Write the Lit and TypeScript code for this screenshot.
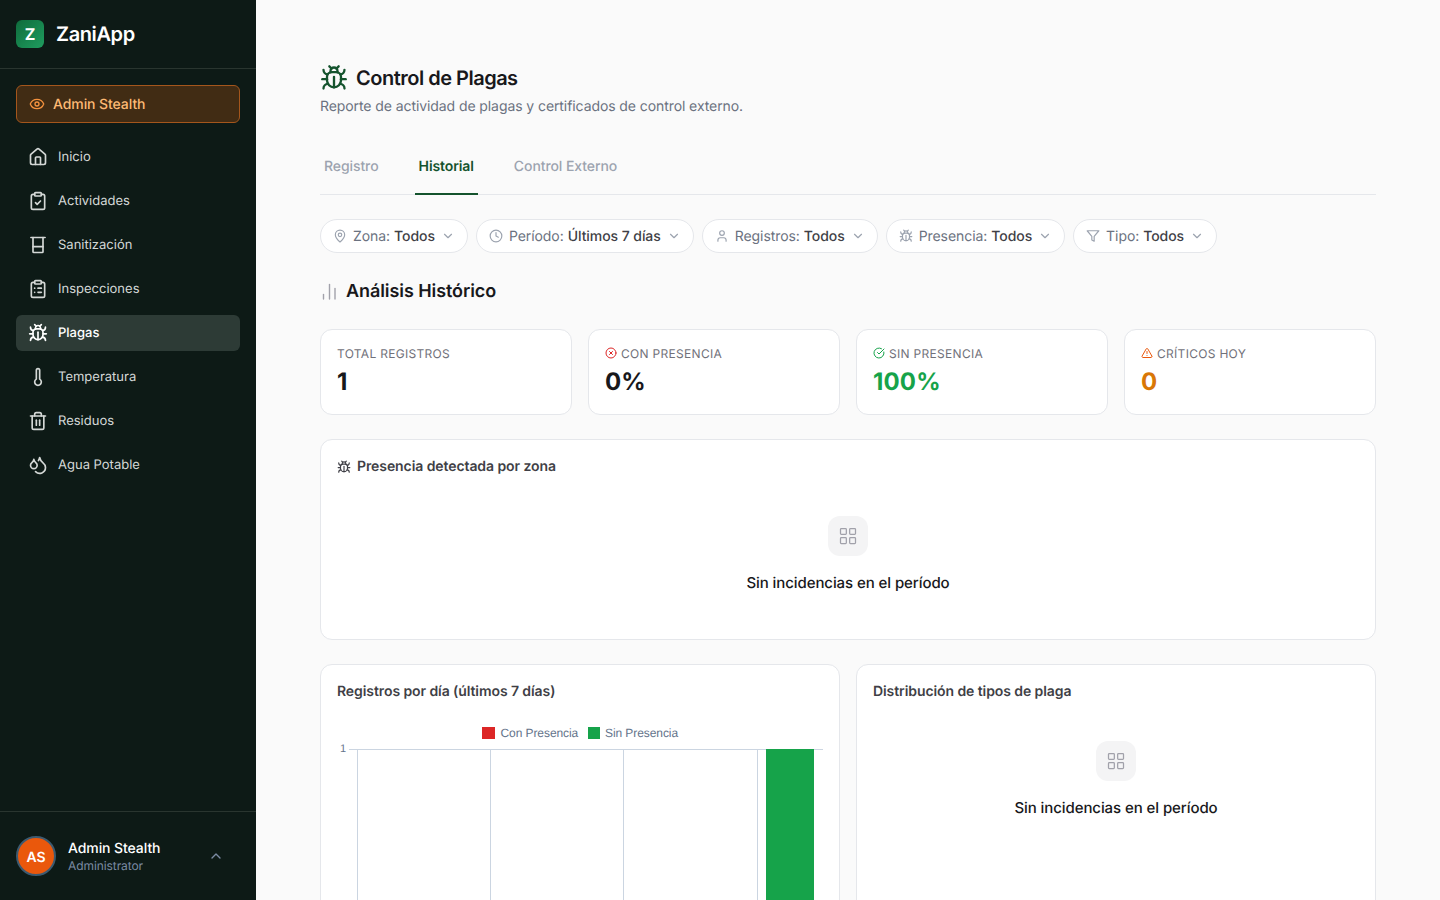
import { LitElement, html, css, svg } from "lit";
import { customElement } from "lit/decorators.js";

const P: Record<string, any> = {
  bug: svg`<path d="m8 2 1.88 1.88"/><path d="M14.12 3.88 16 2"/><path d="M9 7.13v-1a3.003 3.003 0 1 1 6 0v1"/><path d="M12 20c-3.3 0-6-2.7-6-6v-3a4 4 0 0 1 4-4h4a4 4 0 0 1 4 4v3c0 3.3-2.7 6-6 6"/><path d="M12 20v-9"/><path d="M6.53 9C4.6 8.8 3 7.1 3 5"/><path d="M6 13H2"/><path d="M3 21c0-2.1 1.7-3.9 3.8-4"/><path d="M20.97 5c0 2.1-1.6 3.8-3.5 4"/><path d="M22 13h-4"/><path d="M17.2 17c2.1.1 3.8 1.9 3.8 4"/>`,
  home: svg`<path d="M15 21v-8a1 1 0 0 0-1-1h-4a1 1 0 0 0-1 1v8"/><path d="M3 10a2 2 0 0 1 .709-1.528l7-5.999a2 2 0 0 1 2.582 0l7 5.999A2 2 0 0 1 21 10v9a2 2 0 0 1-2 2H5a2 2 0 0 1-2-2z"/>`,
  check: svg`<rect x="8" y="2" width="8" height="4" rx="1"/><path d="M16 4h2a2 2 0 0 1 2 2v14a2 2 0 0 1-2 2H6a2 2 0 0 1-2-2V6a2 2 0 0 1 2-2h2"/><path d="m9 14 2 2 4-4"/>`,
  glass: svg`<path d="M3.5 3h17"/><path d="M6 3v17a1 1 0 0 0 1 1h10a1 1 0 0 0 1-1V3"/><path d="M6 14h12"/>`,
  list: svg`<rect x="8" y="2" width="8" height="4" rx="1"/><path d="M16 4h2a2 2 0 0 1 2 2v14a2 2 0 0 1-2 2H6a2 2 0 0 1-2-2V6a2 2 0 0 1 2-2h2"/><path d="M12 11h4"/><path d="M12 16h4"/><path d="M8 11h.01"/><path d="M8 16h.01"/>`,
  thermo: svg`<path d="M14 4v10.54a4 4 0 1 1-4 0V4a2 2 0 0 1 4 0Z"/>`,
  trash: svg`<path d="M3 6h18"/><path d="M19 6v14c0 1-1 2-2 2H7c-1 0-2-1-2-2V6"/><path d="M8 6V4c0-1 1-2 2-2h4c1 0 2 1 2 2v2"/><line x1="10" x2="10" y1="11" y2="17"/><line x1="14" x2="14" y1="11" y2="17"/>`,
  drops: svg`<path d="M7 16.3c2.2 0 4-1.83 4-4.05 0-1.16-.57-2.26-1.71-3.19S7.29 6.75 7 5.3c-.29 1.45-1.14 2.84-2.29 3.76S3 11.1 3 12.25c0 2.22 1.8 4.05 4 4.05z"/><path d="M12.56 6.6A10.97 10.97 0 0 0 14 3.02c.5 2.5 2 4.9 4 6.5s3 3.5 3 5.5a6.98 6.98 0 0 1-11.91 4.97"/>`,
  eye: svg`<path d="M2.062 12.348a1 1 0 0 1 0-.696 10.75 10.75 0 0 1 19.876 0 1 1 0 0 1 0 .696 10.75 10.75 0 0 1-19.876 0"/><circle cx="12" cy="12" r="3"/>`,
  down: svg`<path d="m6 9 6 6 6-6"/>`,
  up: svg`<path d="m18 15-6-6-6 6"/>`,
  pin: svg`<path d="M20 10c0 4.993-5.539 10.193-7.399 11.799a1 1 0 0 1-1.202 0C9.539 20.193 4 14.993 4 10a8 8 0 0 1 16 0"/><circle cx="12" cy="10" r="3"/>`,
  clock: svg`<circle cx="12" cy="12" r="10"/><polyline points="12 6 12 12 16 14"/>`,
  user: svg`<path d="M19 21v-2a4 4 0 0 0-4-4H9a4 4 0 0 0-4 4v2"/><circle cx="12" cy="7" r="4"/>`,
  filter: svg`<polygon points="22 3 2 3 10 12.46 10 19 14 21 14 12.46 22 3"/>`,
  xc: svg`<circle cx="12" cy="12" r="10"/><path d="m15 9-6 6"/><path d="m9 9 6 6"/>`,
  okc: svg`<path d="M21.801 10A10 10 0 1 1 17 3.335"/><path d="m9 11 3 3L22 4"/>`,
  warn: svg`<path d="m21.73 18-8-14a2 2 0 0 0-3.48 0l-8 14A2 2 0 0 0 4 21h16a2 2 0 0 0 1.73-3"/><path d="M12 9v4"/><path d="M12 17h.01"/>`,
  grid: svg`<rect x="3" y="3" width="7" height="7" rx="1"/><rect x="14" y="3" width="7" height="7" rx="1"/><rect x="14" y="14" width="7" height="7" rx="1"/><rect x="3" y="14" width="7" height="7" rx="1"/>`,
};

const icon = (n: string, cls = "") =>
  html`<svg class="ic ${cls}" viewBox="0 0 24 24" fill="none" stroke="currentColor" stroke-width="2" stroke-linecap="round" stroke-linejoin="round">${P[n]}</svg>`;

const NAV = [
  ["home", "Inicio"],
  ["check", "Actividades"],
  ["glass", "Sanitización"],
  ["list", "Inspecciones"],
  ["bug", "Plagas", true],
  ["thermo", "Temperatura"],
  ["trash", "Residuos"],
  ["drops", "Agua Potable"],
] as [string, string, boolean?][];

const FILTERS = [
  ["pin", "Zona:", "Todos"],
  ["clock", "Período:", "Últimos 7 días"],
  ["user", "Registros:", "Todos"],
  ["bug", "Presencia:", "Todos"],
  ["filter", "Tipo:", "Todos"],
];

@customElement("app-root")
export class AppRoot extends LitElement {
  static styles = css`
    :host {
      display: flex;
      height: 100vh;
      overflow: hidden;
      font-family: Inter, "Noto Sans", sans-serif;
      background: #fafafa;
      color: #18181b;
      letter-spacing: -0.084px;
      text-rendering: geometricPrecision;
    }
    * { box-sizing: border-box; }
    .ic { display: block; flex: none; width: 20px; height: 20px; }
    .side {
      width: 256px;
      flex: none;
      height: 100%;
      background: #0d1a16;
      display: flex;
      flex-direction: column;
    }
    .brand {
      height: 69px;
      flex: none;
      border-bottom: 1px solid #29352f;
      display: flex;
      align-items: center;
      gap: 12px;
      padding: 0 16px;
    }
    .logo {
      width: 28px;
      height: 28px;
      border-radius: 6px;
      background: linear-gradient(135deg, #0f6b3c, #1f9d5f);
      color: #fff;
      font-weight: 700;
      font-size: 16px;
      display: flex;
      align-items: center;
      justify-content: center;
    }
    .brandname { color: #fff; font-size: 20px; font-weight: 600; letter-spacing: -0.4px; }
    .stealth {
      margin: 16px 16px 16px;
      height: 38px;
      border: 1px solid #a4561c;
      border-radius: 6px;
      background: #412c14;
      color: #fdba74;
      display: flex;
      align-items: center;
      gap: 8px;
      padding: 0 12px;
      font-size: 14px;
      font-weight: 500;
    }
    .stealth .ic { width: 16px; height: 16px; color: #f5923e; }
    nav { display: flex; flex-direction: column; gap: 8px; padding: 0 16px; flex: 1; }
    .item {
      height: 36px;
      border-radius: 6px;
      display: flex;
      align-items: center;
      gap: 10px;
      padding: 0 12px;
      color: #d4d8d6;
      font-size: 13px;
      letter-spacing: 0;
    }
    .item.on { background: #2d3b36; color: #fff; font-weight: 500; }
    .foot {
      height: 89px;
      flex: none;
      border-top: 1px solid #29352f;
      display: flex;
      align-items: center;
      padding: 0 32px 0 16px;
      gap: 12px;
    }
    .avatar {
      width: 40px;
      height: 40px;
      border-radius: 50%;
      background: #ea580c;
      border: 2px solid #3c5a70;
      color: #fff;
      font-size: 14px;
      font-weight: 600;
      display: flex;
      align-items: center;
      justify-content: center;
      flex: none;
      padding-top: 2px;
    }
    .who { flex: 1; height: 36px; padding-top: 1px; display: flex; flex-direction: column; }
    .who b { color: #fff; font-size: 14px; line-height: 20px; font-weight: 500; }
    .who span { color: #7b8ba3; font-size: 12px; line-height: 16px; margin-top: -1px; }
    .foot .ic { width: 16px; height: 16px; color: #7b8ba3; }

    main { flex: 1; min-width: 0; height: 100%; overflow: hidden; padding: 64px 64px 0; }
    .title { display: flex; align-items: center; gap: 8px; height: 28px; }
    .title .ic { width: 28px; height: 28px; color: #14532d; }
    h1 { margin: 0; font-size: 20px; line-height: 28px; font-weight: 600; letter-spacing: -0.5px; }
    .sub { margin: 5px 0 0; font-size: 14px; line-height: 20px; color: #6b7280; }
    .tabs {
      margin-top: 26px;
      display: flex;
      gap: 32px;
      border-bottom: 1px solid #e5e7eb;
    }
    .tab {
      padding: 14px 4px 16px;
      margin-bottom: -1px;
      font-size: 14px;
      line-height: 20px;
      font-weight: 500;
      color: #9ca3af;
      border-bottom: 2px solid transparent;
    }
    .tab.on { color: #14532d; font-weight: 600; letter-spacing: -0.1px; border-bottom-color: #14532d; }
    .filters { margin-top: 24px; display: flex; gap: 8px; }
    .pill {
      height: 34px;
      padding: 0 12px;
      background: #fff;
      border: 1px solid #e5e7eb;
      border-radius: 17px;
      display: flex;
      align-items: center;
      gap: 6px;
      font-size: 14px;
      letter-spacing: -0.065px;
      color: #6b7280;
    }
    .pill .ic { width: 14px; height: 14px; color: #9ca3af; }
    .pill b { font-weight: 500; color: #3f3f46; }
    .pill .lbl { display: flex; gap: 4px; }
    h2 {
      margin: 25px 0 0;
      height: 28px;
      display: flex;
      align-items: center;
      gap: 6px;
      font-size: 18px;
      line-height: 28px;
      font-weight: 600;
      letter-spacing: -0.08px;
    }
    h2 svg { display: block; flex: none; color: #a1a1aa; }
    .stats { margin-top: 23px; display: grid; grid-template-columns: repeat(4, 1fr); gap: 16px; }
    .stat {
      height: 86px;
      background: #fff;
      border: 1px solid #e5e7eb;
      border-radius: 12px;
      padding: 15px 16px 16px;
    }
    .lab {
      display: flex;
      align-items: center;
      gap: 4px;
      height: 16px;
      font-size: 12px;
      letter-spacing: 0.3px;
      color: #71717a;
    }
    .lab .ic { width: 12px; height: 12px; }
    .red { color: #dc2626; }
    .grn { color: #16a34a; }
    .org { color: #ea580c; }
    .amb { color: #d97706; }
    .val { margin-top: 5px; font-size: 24px; line-height: 32px; font-weight: 700; letter-spacing: 0.15px; }
    .card {
      background: #fff;
      border: 1px solid #e5e7eb;
      border-radius: 12px;
      padding: 16px;
    }
    .zone { margin-top: 24px; height: 201px; }
    .ct {
      display: flex;
      align-items: center;
      gap: 6px;
      font-size: 14px;
      line-height: 22px;
      font-weight: 600;
      color: #3f3f46;
    }
    .ct .ic { width: 14px; height: 14px; }
    .empty { display: flex; flex-direction: column; align-items: center; margin-top: 38px; }
    .ebox {
      width: 40px;
      height: 40px;
      border-radius: 12px;
      background: #f4f4f5;
      display: flex;
      align-items: center;
      justify-content: center;
      color: #a1a1aa;
    }
    .ebox .ic { stroke-width: 1.5; }
    .etext { margin-top: 16px; font-size: 15px; line-height: 22px; font-weight: 500; color: #18181b; }
    .row { margin-top: 24px; display: grid; grid-template-columns: 1fr 1fr; gap: 16px; }
    .big { height: 400px; }
    .chart { display: block; margin-top: 14px; }
    .chart text { font-family: "Liberation Sans", Arial, sans-serif; font-size: 12px; letter-spacing: -0.08px; fill: #64748b; }
    .chart .tick { font-size: 11px; }
  `;

  render() {
    const empty = html`<div class="empty"><div class="ebox">${icon("grid")}</div><div class="etext">Sin incidencias en el período</div></div>`;
    const xs = [357.5, 490.5, 623.5, 757.5];
    return html`
      <aside class="side">
        <div class="brand"><div class="logo">Z</div><div class="brandname">ZaniApp</div></div>
        <div class="stealth">${icon("eye")}Admin Stealth</div>
        <nav>
          ${NAV.map(([i, t, on]) => html`<div class="item ${on ? "on" : ""}">${icon(i)}<span>${t}</span></div>`)}
        </nav>
        <div class="foot">
          <div class="avatar">AS</div>
          <div class="who"><b>Admin Stealth</b><span>Administrator</span></div>
          ${icon("up")}
        </div>
      </aside>
      <main>
        <div class="title">${icon("bug")}<h1>Control de Plagas</h1></div>
        <p class="sub">Reporte de actividad de plagas y certificados de control externo.</p>
        <div class="tabs">
          <div class="tab">Registro</div>
          <div class="tab on">Historial</div>
          <div class="tab">Control Externo</div>
        </div>
        <div class="filters">
          ${FILTERS.map(
            ([i, a, b]) => html`<div class="pill">${icon(i)}<span class="lbl">${a} <b>${b}</b></span>${icon("down")}</div>`
          )}
        </div>
        <h2>
          <svg width="20" height="20" viewBox="0 0 20 20" fill="none" stroke="currentColor" stroke-width="1.4" stroke-linecap="round">
            <line x1="3.5" x2="3.5" y1="12.5" y2="17"/><line x1="9.5" x2="9.5" y1="2.5" y2="17"/><line x1="15" x2="15" y1="6.5" y2="17"/>
          </svg>Análisis Histórico
        </h2>
        <div class="stats">
          <div class="stat"><div class="lab">TOTAL REGISTROS</div><div class="val">1</div></div>
          <div class="stat"><div class="lab"><span class="red">${icon("xc")}</span>CON PRESENCIA</div><div class="val">0%</div></div>
          <div class="stat"><div class="lab"><span class="grn">${icon("okc")}</span>SIN PRESENCIA</div><div class="val grn">100%</div></div>
          <div class="stat"><div class="lab"><span class="org">${icon("warn")}</span>CRÍTICOS HOY</div><div class="val amb">0</div></div>
        </div>
        <div class="card zone">
          <div class="ct">${icon("bug")}Presencia detectada por zona</div>
          ${empty}
        </div>
        <div class="row">
          <div class="card big">
            <div class="ct">Registros por día (últimos 7 días)</div>
            <svg class="chart" width="486" height="260" viewBox="337 717 486 260">
              <rect x="482" y="727" width="13" height="12" fill="#dc2626"/>
              <text x="500.5" y="737">Con Presencia</text>
              <rect x="588" y="727" width="12" height="12" fill="#16a34a"/>
              <text x="605" y="737">Sin Presencia</text>
              <text class="tick" x="340" y="752">1</text>
              <line x1="349" x2="823" y1="749.5" y2="749.5" stroke="#cbd5e1"/>
              ${xs.map((x) => svg`<line x1=${x} x2=${x} y1="749" y2="977" stroke="#cbd5e1"/>`)}
              <rect x="766" y="749" width="48" height="228" fill="#16a34a"/>
            </svg>
          </div>
          <div class="card big">
            <div class="ct">Distribución de tipos de plaga</div>
            ${empty}
          </div>
        </div>
      </main>
    `;
  }
}
